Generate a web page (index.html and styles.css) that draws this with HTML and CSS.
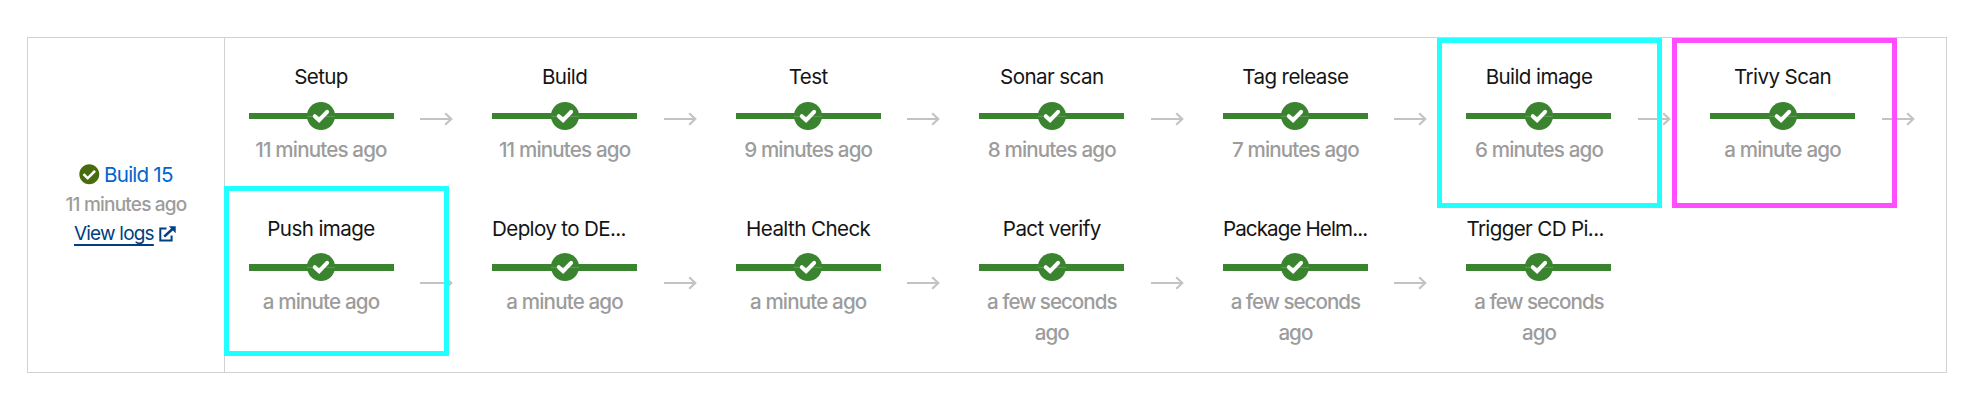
FILE: index.html
```html
<!DOCTYPE html>
<html lang="en">
<head>
<meta charset="utf-8">
<title>Build 15</title>
<link rel="stylesheet" href="styles.css">
</head>
<body>
<svg class="defs" aria-hidden="true">
  <symbol id="ok" viewBox="0 0 28 28">
    <circle cx="14" cy="14" r="14" fill="#3a832f"/>
    <path d="M0 14.4H28" stroke="#fff" stroke-opacity=".2" stroke-width="1"/>
    <path d="M7.8 14.2L12.1 18.2L20.1 9.8" fill="none" stroke="#fff" stroke-width="4" stroke-linecap="round" stroke-linejoin="miter"/>
  </symbol>
  <symbol id="arrow" viewBox="0 0 33 14">
    <path d="M0 7H31M25.2 1.2L31.3 7L25.2 12.8" fill="none" stroke="#c3c3c3" stroke-width="2.1"/>
  </symbol>
</svg>
<main class="panel">
  <section class="summary">
    <div class="build"><svg class="build-icon" viewBox="0 0 512 512"><path fill="#486b0f" d="M504 256c0 136.967-111.033 248-248 248S8 392.967 8 256 119.033 8 256 8s248 111.033 248 248zM227.314 387.314l184-184c6.248-6.248 6.248-16.379 0-22.627l-22.627-22.627c-6.248-6.249-16.379-6.249-22.628 0L216 308.118l-70.059-70.059c-6.248-6.248-16.379-6.248-22.628 0l-22.627 22.627c-6.248 6.248-6.248 16.379 0 22.627l104 104c6.249 6.249 16.379 6.249 22.628.001z"/></svg><a class="build-link">Build 15</a></div>
    <div class="build-age">11 minutes ago</div>
    <div class="logs"><a class="logs-link">View logs</a><svg class="logs-icon" viewBox="0 0 17 16"><path d="M7.5 2.6H1.3V14.6H12.6V9.5" fill="none" stroke="#004080" stroke-width="2"/><path d="M5.2 10.6L13.5 3" stroke="#004080" stroke-width="2.6"/><path d="M9.8 .3H16.7V7.2Z" fill="#004080"/></svg></div>
  </section>
  <section class="stages">
    <div class="row">
      <div class="stage"><div class="body"><div class="name">Setup</div><div class="bar"><svg><use href="#ok"/></svg></div><div class="age">11 minutes ago</div></div><svg class="arrow"><use href="#arrow"/></svg></div>
      <div class="stage"><div class="body"><div class="name">Build</div><div class="bar"><svg><use href="#ok"/></svg></div><div class="age">11 minutes ago</div></div><svg class="arrow"><use href="#arrow"/></svg></div>
      <div class="stage"><div class="body"><div class="name">Test</div><div class="bar"><svg><use href="#ok"/></svg></div><div class="age">9 minutes ago</div></div><svg class="arrow"><use href="#arrow"/></svg></div>
      <div class="stage"><div class="body"><div class="name">Sonar scan</div><div class="bar"><svg><use href="#ok"/></svg></div><div class="age">8 minutes ago</div></div><svg class="arrow"><use href="#arrow"/></svg></div>
      <div class="stage"><div class="body"><div class="name">Tag release</div><div class="bar"><svg><use href="#ok"/></svg></div><div class="age">7 minutes ago</div></div><svg class="arrow"><use href="#arrow"/></svg></div>
      <div class="stage"><div class="body"><div class="name">Build image</div><div class="bar"><svg><use href="#ok"/></svg></div><div class="age">6 minutes ago</div></div><svg class="arrow"><use href="#arrow"/></svg><span class="mark mark-image"></span></div>
      <div class="stage"><div class="body"><div class="name">Trivy Scan</div><div class="bar"><svg><use href="#ok"/></svg></div><div class="age">a minute ago</div></div><svg class="arrow"><use href="#arrow"/></svg><span class="mark mark-scan"></span></div>
    </div>
    <div class="row row-last">
      <div class="stage"><div class="body"><div class="name">Push image</div><div class="bar"><svg><use href="#ok"/></svg></div><div class="age">a minute ago</div></div><svg class="arrow"><use href="#arrow"/></svg><span class="mark mark-push"></span></div>
      <div class="stage"><div class="body"><div class="name name-cut">Deploy to DE...</div><div class="bar"><svg><use href="#ok"/></svg></div><div class="age">a minute ago</div></div><svg class="arrow"><use href="#arrow"/></svg></div>
      <div class="stage"><div class="body"><div class="name">Health Check</div><div class="bar"><svg><use href="#ok"/></svg></div><div class="age">a minute ago</div></div><svg class="arrow"><use href="#arrow"/></svg></div>
      <div class="stage"><div class="body"><div class="name">Pact verify</div><div class="bar"><svg><use href="#ok"/></svg></div><div class="age age-wrap">a few seconds ago</div></div><svg class="arrow"><use href="#arrow"/></svg></div>
      <div class="stage"><div class="body"><div class="name name-cut name-tight">Package Helm...</div><div class="bar"><svg><use href="#ok"/></svg></div><div class="age age-wrap">a few seconds ago</div></div><svg class="arrow"><use href="#arrow"/></svg></div>
      <div class="stage"><div class="body"><div class="name name-cut">Trigger CD Pi...</div><div class="bar"><svg><use href="#ok"/></svg></div><div class="age age-wrap">a few seconds ago</div></div></div>
    </div>
  </section>
</main>
</body>
</html>
```
FILE: styles.css
```css
* { box-sizing: border-box; }
body {
  margin: 0;
  padding: 37px 35px 0 27px;
  background: #fff;
  color: #151515;
  font: 20.6px/31px Inter, "Liberation Sans", sans-serif;
}
svg { display: block; flex: none; }
.defs { width: 0; height: 0; position: absolute; }
.panel {
  display: flex;
  width: 1920px;
  height: 336px;
  border: 1px solid #d2d2d2;
}
.summary {
  flex: none;
  width: 197px;
  padding-top: 121px;
  border-right: 1px solid #d2d2d2;
  text-align: center;
  white-space: nowrap;
}
.build { display: flex; align-items: center; gap: 4.5px; padding-left: 51px; height: 31px; }
.build-icon { width: 20.6px; height: 20.6px; }
.build-link { color: #0066cc; letter-spacing: -0.8px; }
.build-age { color: #9c9c9c; font-size: 19px; font-weight: 450; letter-spacing: -0.8px; height: 29px; line-height: 30px; }
.logs { display: flex; gap: 5.5px; padding-left: 46px; font-size: 19px; line-height: 29px; }
.logs-link {
  color: #004080;
  letter-spacing: -0.8px;
  text-decoration: underline;
  text-decoration-thickness: 2px;
  text-underline-offset: 4px;
}
.logs-icon { width: 17px; height: 16px; margin-top: 7px; }
.stages { padding: 23px 0 0 23.5px; }
.row { display: grid; grid-template-columns: repeat(7, 243.6px); height: 152px; }
.stage { position: relative; display: flex; }
.body { width: 145px; text-align: center; }
.name { height: 41px; white-space: nowrap; letter-spacing: -0.6px; }
.name-cut { text-align: left; letter-spacing: -0.65px; }
.name-tight { letter-spacing: -0.9px; }
.bar {
  display: flex;
  justify-content: center;
  height: 28px;
  background: linear-gradient(#3a832f, #3a832f) 0 11px / 100% 6px no-repeat;
}
.row-last .name { height: 40px; }
.row-last .bar { background-size: 100% 7px; }
.bar svg { width: 28px; height: 28px; }
.age { padding-top: 4px; color: #9c9c9c; font-weight: 450; letter-spacing: -0.85px; }
.row-last .age { padding-top: 5px; }
.row-last .age-wrap { letter-spacing: -1px; }
.arrow { width: 33px; height: 14px; margin: 51px 0 0 26.5px; }
.row-last .arrow { margin-top: 62.5px; }
/* Highlight frames lie over the stages and their arrows */
.mark { position: absolute; width: 225px; height: 170px; border: 5.5px solid #2ff; }
.mark-image { top: -23.4px; left: -29.5px; }
.mark-scan { top: -23.4px; left: -38px; border-color: #ff4dff; }
.mark-push { top: -27.4px; left: -24.5px; }
```
